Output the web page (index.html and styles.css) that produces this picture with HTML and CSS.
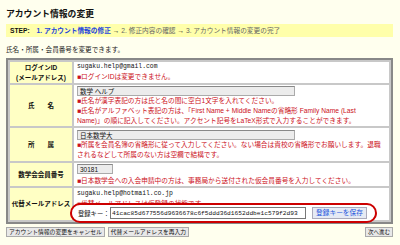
FILE: index.html
```html
<!DOCTYPE html>
<html lang="ja">
<head>
  <meta charset="utf-8">
  <title>アカウント情報の変更</title>
  <link rel="stylesheet" href="styles.css">
</head>
<body>
<div class="page">
  <h2 class="title">アカウント情報の変更</h2>
  <div class="step">
    <b class="step-label">STEP:</b>
    <span class="step-now">1. アカウント情報の修正</span>
    <span class="step-rest"><span class="arr">→</span> 2. 修正内容の確認 <span class="arr">→</span> 3. アカウント情報の変更の完了</span>
  </div>
  <p class="lead">氏名・所属・会員番号を変更できます。</p>

  <div class="formwrap">
    <table class="form">
      <tr class="r1">
        <th>ログインID<br>(メールアドレス)</th>
        <td>
          <div class="mono">sugaku.help@gmail.com</div>
          <div class="note">■ログインIDは変更できません。</div>
        </td>
      </tr>
      <tr class="r2">
        <th>氏　　名</th>
        <td>
          <input class="field wide" type="text" value="数学 ヘルプ">
          <div class="note">■氏名が漢字表記の方は氏と名の間に空白1文字を入れてください。<br>■氏名がアルファベット表記の方は、「First Name + Middle Nameの省略形 Family Name (Last<br>Name)」の順に記入してください。アクセント記号をLaTeX形式で入力することができます。</div>
        </td>
      </tr>
      <tr class="r3">
        <th>所　　属</th>
        <td>
          <input class="field wide" type="text" value="日本数学大">
          <div class="note">■所属を会員名簿の省略形に従って入力してください。ない場合は貴校の省略形でお願いします。退職<br>されるなどして所属のない方は空欄で結構です。</div>
        </td>
      </tr>
      <tr class="r4">
        <th>数学会会員番号</th>
        <td>
          <input class="field short" type="text" value="30181">
          <div class="note">■日本数学会への入会申請中の方は、事務局から送付された仮会員番号を入力してください。</div>
        </td>
      </tr>
      <tr class="r5">
        <th>代替メールアドレス</th>
        <td>
          <div class="mono">sugaku.help@hotmail.co.jp</div>
          <div class="note">■代替メールアドレスは仮登録の状態です。</div>
        </td>
      </tr>
    </table>
    <!-- 登録キー（赤枠で強調） -->
    <div class="keybox">
      <span class="key-label">登録キー：</span>
      <input class="key" type="text" value="41cac85d677556d9636678c6f5ddd36d1652ddbe1c579f2d93">
      <button class="save">登録キーを保存</button>
    </div>
  </div>

  <div class="btns">
    <button class="btn">アカウント情報の変更をキャンセル</button>
    <button class="btn">代替メールアドレスを再入力</button>
    <button class="btn next">次へ進む</button>
  </div>
</div>
</body>
</html>
```

FILE: styles.css
```css
body,h2,p,table,th,td,button,input{margin:0;padding:0;}
body{background:#ffffee;font-family:"Liberation Sans","Noto Sans CJK JP",sans-serif;color:#222;}
.page{width:387px;padding:0 7px 0 6px;}
.title{padding-top:8px;font-size:8.8px;line-height:12px;font-weight:bold;color:#111;}
.step{margin-top:4px;height:13px;line-height:13px;padding-left:4px;background:#ffffaa;font-size:6.7px;color:#666;white-space:nowrap;}
.step-label{color:#111;margin-right:5px;}
.step-now{color:#2244dd;font-weight:bold;}
.arr{color:#111;}
.lead{margin-top:8px;line-height:10px;font-size:6.6px;color:#222;}

.formwrap{position:relative;margin-top:3px;}
.form{width:100%;border-collapse:separate;border-spacing:2px;background:#c8c8c8;border:2px solid #888;}
.form th{width:62px;background:#ffffc4;font-size:6.5px;line-height:10px;text-align:center;vertical-align:middle;color:#111;white-space:nowrap;}
.form td{background:#fff;padding:0 3px;vertical-align:top;font-size:6.7px;line-height:10px;}
.r1 td{height:21px;}
.r2 td{height:40px;padding-top:1px;}
.r3 td{height:31px;padding-top:2px;}
.r4 td{height:22px;padding-top:1px;}
.r5 td{height:31px;padding-top:1px;}
.mono{font-family:"Liberation Mono","DejaVu Sans Mono",monospace;font-size:6.4px;color:#111;}
.note{color:#cc1122;white-space:nowrap;}
.field{display:block;height:10px;box-sizing:border-box;border:1px solid #aaa;border-top-color:#888;background:#ececec;font-family:"Liberation Sans","Noto Sans CJK JP",sans-serif;font-size:6.5px;color:#111;padding:0 2px;}
.wide{width:218px;}
.short{width:36px;margin-bottom:2px;}

.keybox{position:absolute;left:64px;top:145px;width:307px;height:20px;box-sizing:border-box;display:flex;align-items:center;padding:0 8px 0 6px;background:#fff;border:2px solid #cc0000;border-radius:10px;}
.key-label{width:31px;font-size:6.3px;color:#111;white-space:nowrap;}
.key{width:196px;height:12px;box-sizing:border-box;margin-left:1px;border:1px solid #777;background:#fff;padding:0 1px;font-family:"Liberation Mono","DejaVu Sans Mono",monospace;font-size:6.2px;color:#111;}
.save{width:55px;height:12px;margin-left:6px;border:1px solid #aab;background:#e6eaf4;color:#2255dd;font-family:"Liberation Sans","Noto Sans CJK JP",sans-serif;font-size:6.7px;line-height:10px;white-space:nowrap;}

.btns{display:flex;gap:3px;margin-top:3px;}
.btn{height:10px;padding:0 2px;border:1px solid #aaa;background:#e8e8e8;font-family:"Liberation Sans","Noto Sans CJK JP",sans-serif;font-size:5.8px;line-height:8px;color:#111;white-space:nowrap;}
.next{margin-left:auto;font-size:5.5px;}
```
